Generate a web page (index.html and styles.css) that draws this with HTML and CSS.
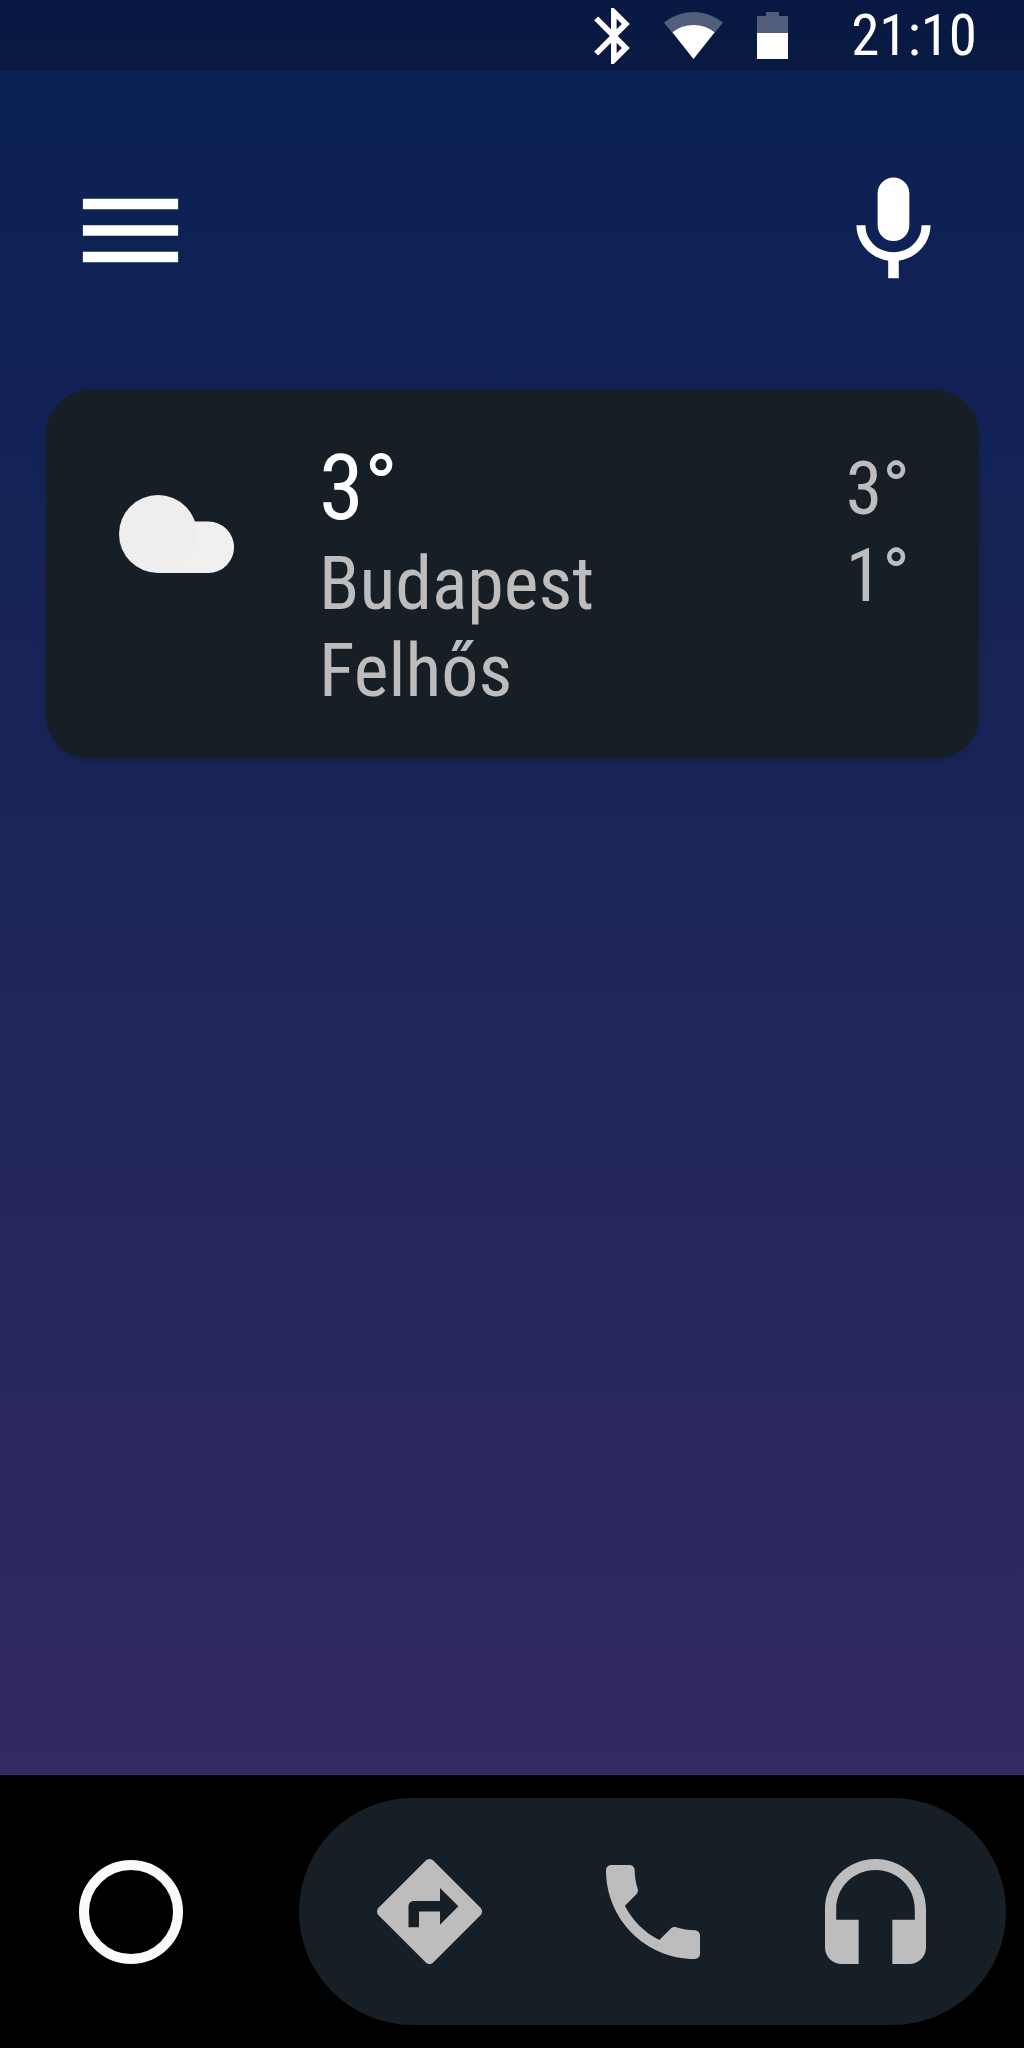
FILE: index.html
```html
<!DOCTYPE html>
<html lang="en">
<head>
  <meta charset="UTF-8">
  <meta name="viewport" content="width=device-width, initial-scale=1.0">
  <title>Home</title>
  <link rel="stylesheet" href="styles.css">
</head>
<body>
  <div class="screen">
    <div class="main">
      <div class="status-bar">
        <svg class="bluetooth" width="36" height="56" viewBox="5 2 12.71 20"><path d="M17.71 7.71L12 2h-1v7.59L6.41 5 5 6.41 10.59 12 5 17.59 6.41 19 11 14.41V22h1l5.71-5.71-4.3-4.29 4.3-4.29zM13 5.83l1.88 1.88L13 9.59V5.83zm1.88 10.46L13 18.17v-3.76l1.88 1.88z"/></svg>
        <svg class="wifi" width="59" height="47" viewBox="0 0 59 47">
          <path class="dim" d="M0 10.4A47 47 0 0 1 59 10.4L29.5 47z"/>
          <path d="M8.5 20.3A34 34 0 0 1 50.5 20.3L29.5 47z"/>
        </svg>
        <svg class="battery" width="31" height="47" viewBox="0 0 31 47">
          <path class="dim" d="M0 21V4h9V0h13v4h9v17z"/>
          <rect y="21" width="31" height="26"/>
        </svg>
        <span class="time">21:10</span>
      </div>

      <div class="toolbar">
        <svg width="127" height="127" viewBox="0 0 24 24"><path d="M3 18h18v-2H3v2zm0-5h18v-2H3v2zm0-7v2h18V6H3z"/></svg>
        <svg width="127" height="127" viewBox="0 0 24 24"><path d="M12 14c1.66 0 2.99-1.34 2.99-3L15 5c0-1.66-1.34-3-3-3S9 3.34 9 5v6c0 1.66 1.34 3 3 3zm5.3-3c0 3-2.54 5.1-5.3 5.1S6.7 14 6.7 11H5c0 3.41 2.72 6.23 6 6.72V21h2v-3.28c3.28-.48 6-3.3 6-6.72h-1.7z"/></svg>
      </div>

      <div class="card">
        <svg class="cloud" width="115" height="78" viewBox="0 0 115 78">
          <path class="cloud-back" d="M50 78V26.500h39.300a25.700 25.700 0 0 1 0 51.500z"/>
          <circle class="cloud-front" cx="39" cy="39" r="39"/>
          <rect class="cloud-front" x="39" y="70" width="22" height="8"/>
        </svg>
        <div class="weather-info">
          <div class="temp">3°</div>
          <div>Budapest</div>
          <div>Felhős</div>
        </div>
        <div class="temp-range">
          <div>3°</div>
          <div>1°</div>
        </div>
      </div>
    </div>

    <div class="bottom-bar">
      <div class="home-btn"></div>
      <div class="nav-pill">
        <div class="nav-item">
          <svg width="105" height="105" viewBox="2 2 20 20"><path d="M21.71 11.29l-9-9c-.39-.39-1.02-.39-1.41 0l-9 9c-.39.39-.39 1.02 0 1.41l9 9c.39.39 1.02.39 1.41 0l9-9c.39-.38.39-1.01 0-1.41zM14 14.5V12h-4v3H8v-4c0-.55.45-1 1-1h5V7.5l3.500 3.500-3.500 3.500z"/></svg>
        </div>
        <div class="nav-item">
          <svg width="94" height="94" viewBox="3 3 18 18"><path d="M6.620 10.790c1.440 2.830 3.760 5.140 6.590 6.590l2.200-2.200c.27-.27.67-.36 1.020-.24 1.120.37 2.330.57 3.570.57.55 0 1 .45 1 1V20c0 .55-.45 1-1 1-9.390 0-17-7.610-17-17 0-.55.45-1 1-1h3.500c.55 0 1 .45 1 1 0 1.250.2 2.450.57 3.570.11.35.03.74-.25 1.020l-2.200 2.200z"/></svg>
        </div>
        <div class="nav-item">
          <svg width="101" height="105" viewBox="3 1 18 19" preserveAspectRatio="none"><path d="M12 1c-4.970 0-9 4.030-9 9v7c0 1.660 1.340 3 3 3h3v-8H5v-2c0-3.870 3.130-7 7-7s7 3.130 7 7v2h-4v8h3c1.660 0 3-1.340 3-3v-7c0-4.970-4.030-9-9-9z"/></svg>
        </div>
      </div>
    </div>
  </div>
</body>
</html>
```

FILE: styles.css
```css
body {
  margin: 0;
  background-color: #000;
  font-family: "Roboto Condensed", Roboto, sans-serif;
  font-stretch: 75%;
}

svg {
  display: block;
  fill: white;
  flex-shrink: 0;
}

.screen {
  display: flex;
  flex-direction: column;
  height: 2048px;
}

.main {
  flex: 1;
  background: linear-gradient(to bottom, #092053, #322a60);
}

.status-bar {
  display: flex;
  align-items: center;
  justify-content: flex-end;
  height: 71px;
  padding-right: 47px;
  gap: 34px;
  background-color: rgba(0, 0, 0, 0.2);
  box-sizing: border-box;
}

.dim {
  opacity: 0.3;
}

.time {
  margin-left: 29px;
  color: white;
  font-size: 57px;
  line-height: 71px;
}

.toolbar {
  display: flex;
  justify-content: space-between;
  margin-top: 96px;
  padding: 0 67px;
}

.card {
  display: flex;
  align-items: flex-start;
  height: 369px;
  margin: 96px 45px 0 46px;
  border-radius: 44px;
  background-color: #171f26;
  box-shadow: 0px 4px 10px rgba(0, 0, 0, 0.12);
}

.cloud {
  margin: 105px 85px 0 73px;
}

.cloud-front {
  fill: #eeeeee;
}

.cloud-back {
  fill: #f0f0f0;
}

.weather-info {
  padding-top: 46px;
  color: #bdbdbd;
  font-size: 74px;
  line-height: 87px;
}

.temp {
  color: white;
  font-size: 91px;
  line-height: 104px;
}

.temp-range {
  margin-left: auto;
  padding: 55px 69px 0 0;
  color: #bdbdbd;
  font-size: 74px;
  line-height: 87px;
}

.bottom-bar {
  display: flex;
  align-items: center;
  height: 273px;
  box-sizing: border-box;
}

.home-btn {
  width: 84px;
  height: 84px;
  margin: 0 116px 0 79px;
  border: 10px solid #fafafa;
  border-radius: 50%;
}

.nav-pill {
  display: grid;
  grid-template-columns: repeat(3, 223px);
  justify-content: center;
  align-items: center;
  width: 707px;
  height: 227px;
  border-radius: 114px;
  background-color: #171f26;
}

.nav-item {
  display: flex;
  justify-content: center;
}

.nav-item svg {
  fill: #bdbdbd;
}
```
